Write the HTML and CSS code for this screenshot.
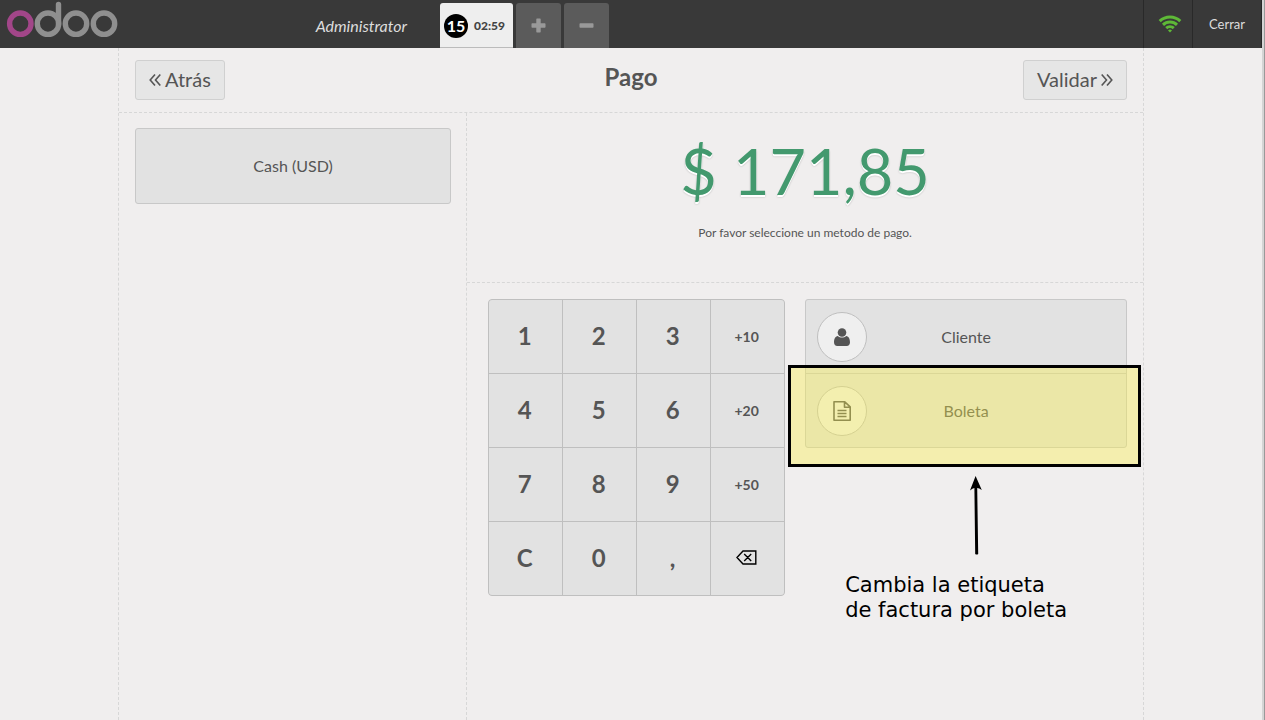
FILE: index.html
```html
<!DOCTYPE html>
<html lang="es">
<head>
<meta charset="utf-8">
<title>Pago</title>
<meta name="viewport" content="width=device-width, initial-scale=1">
<link rel="stylesheet" href="styles.css">
</head>
<body>
<div class="app">
  <header class="topbar">
    <div class="branding">
      <svg class="logo" width="112" height="38" viewBox="0 0 112 38" fill="none" stroke-width="5.400" role="img" aria-label="odoo">
        <g stroke="#8f8f8f">
          <circle cx="42" cy="23.700" r="10.700"/>
          <circle cx="70" cy="23.700" r="10.700"/>
          <circle cx="98" cy="23.700" r="10.700"/>
          <path d="M52.500 24V4.500" stroke-linecap="round"/>
        </g>
        <circle cx="14.300" cy="23.700" r="10.700" stroke="#a24689"/>
      </svg>
      <span class="username">Administrator</span>
    </div>
    <nav class="orders">
      <button class="order selected" type="button"><span class="order-number">15</span><span class="order-time">02:59</span></button>
      <button class="order square" type="button" aria-label="Nuevo pedido">
        <svg width="15" height="15" viewBox="0 0 15 15" fill="#999"><path d="M6 .5h3q.7 0 .7.700V5.300h4.100q.7 0 .7.700v3q0 .7-.7.700H9.700v4.100q0 .7-.7.700H6q-.7 0-.7-.7V9.700H1.200q-.7 0-.7-.7V6q0-.7.700-.7h4.100V1.200q0-.7.700-.7z"/></svg>
      </button>
      <button class="order square" type="button" aria-label="Eliminar pedido">
        <svg width="15" height="15" viewBox="0 0 15 15" fill="#999"><rect x=".5" y="5.300" width="14" height="4.400" rx=".8"/></svg>
      </button>
    </nav>
    <div class="status">
      <div class="wifi">
        <svg width="24" height="18" viewBox="0 0 24 18" fill="none" stroke="#5eb937" stroke-width="3" role="img" aria-label="Conectado">
          <path d="M1.700 6.200C7.500.6 16.500.6 22.300 6.200"/>
          <path d="M5 9.800c4-3.800 10-3.800 14 0"/>
          <path d="M8.200 13.200c2.200-2 5.400-2 7.600 0"/>
          <path d="M10 15.400q2-1.600 4 0L12 17.600z" fill="#5eb937" stroke="none"/>
        </svg>
      </div>
      <button class="close" type="button">Cerrar</button>
    </div>
  </header>

  <main class="screen">
    <div class="titlebar">
      <button class="nav-button" type="button">
        <svg width="12" height="14" viewBox="0 0 12 14" fill="none" stroke="currentColor" stroke-width="1.600"><path d="M6 1.500 1.200 7 6 12.500M11.300 1.500 6.500 7l4.800 5.500"/></svg>
        <span>Atrás</span>
      </button>
      <h1>Pago</h1>
      <button class="nav-button" type="button">
        <span>Validar</span>
        <svg width="12" height="14" viewBox="0 0 12 14" fill="none" stroke="currentColor" stroke-width="1.600"><path d="M.7 1.500 5.500 7 .7 12.500M6 1.500 10.800 7 6 12.500"/></svg>
      </button>
    </div>
    <div class="columns">
      <section class="methods">
        <button class="method" type="button">Cash (USD)</button>
      </section>
      <section class="payment">
        <div class="summary">
          <div class="total">$ 171,85</div>
          <div class="hint">Por favor seleccione un metodo de pago.</div>
        </div>
        <div class="controls">
          <div class="numpad">
            <button type="button">1</button><button type="button">2</button><button type="button">3</button><button type="button" class="mode">+10</button>
            <button type="button">4</button><button type="button">5</button><button type="button">6</button><button type="button" class="mode">+20</button>
            <button type="button">7</button><button type="button">8</button><button type="button">9</button><button type="button" class="mode">+50</button>
            <button type="button">C</button><button type="button">0</button><button type="button">,</button>
            <button type="button" aria-label="Borrar">
              <svg width="21" height="15" viewBox="0 0 21 15" fill="none" stroke="#000" stroke-width="1.400"><path d="M7 1h12.800v13H7L1 7.500zM8.200 4l7 7M15.200 4l-7 7"/></svg>
            </button>
          </div>
          <div class="side">
            <div class="options">
              <button class="option" type="button">
                <span class="badge"><svg width="16" height="18" viewBox="0 0 16 18" fill="#555"><circle cx="8" cy="4.500" r="4.300"/><path d="M3.800 7.900C1.200 8.200 0 10.800 0 14.300 0 16.500 1.300 18 3.300 18h9.400c2 0 3.300-1.500 3.300-3.700 0-3.500-1.200-6.100-3.800-6.400-2.400 2.200-6 2.200-8.400 0z"/></svg></span>
                <span class="option-label">Cliente</span>
              </button>
              <button class="option" type="button">
                <span class="badge"><svg width="18" height="20" viewBox="0 0 18 20" fill="none" stroke="#555" stroke-width="1.600"><path d="M1 .8h10.800l5.400 5v13.400H1zM11.500 1v5.300h5.500M4.500 9.500h9M4.500 12.500h9M4.500 15.500h9" stroke-linejoin="round"/></svg></span>
                <span class="option-label">Boleta</span>
              </button>
              <div class="highlight"></div>
            </div>
            <div class="note">
              <svg class="arrow" width="12" height="79" viewBox="0 0 12 79"><path d="M5.600 0 11.800 14Q9 12 7.200 12L8.200 78q-1.500 1-3 0L4.400 12Q2.500 12 0 14.500z"/></svg>
              <p>Cambia la etiqueta<br>de factura por boleta</p>
            </div>
          </div>
        </div>
      </section>
    </div>
  </main>
</div>
</body>
</html>
```
FILE: styles.css
```css
* { box-sizing: border-box; }

body {
  margin: 0;
  border-right: 1px solid #999;
  background: #f0eeee;
  color: #555;
  font-family: Lato, "Liberation Sans", sans-serif;
  font-size: 16px;
}

button {
  margin: 0;
  padding: 0;
  border: 0;
  font: inherit;
  color: inherit;
  background: none;
  cursor: pointer;
}

svg { display: block; flex: none; }

.app {
  display: flex;
  flex-direction: column;
  min-height: 100vh;
  border-right: 2px solid #d4d4d4;
}

.topbar {
  display: flex;
  height: 48px;
  background: #393939;
  color: #ddd;
}

.branding {
  display: flex;
  justify-content: space-between;
  align-items: center;
  width: 440px;
  padding: 0 33px 0 6px;
}

.logo { align-self: flex-start; }

.username {
  padding-top: 2px;
  font-style: italic;
  color: #ddd;
}

.orders {
  display: flex;
  flex: 1;
  gap: 3px;
  padding-top: 3px;
}

.order {
  display: flex;
  align-items: center;
  justify-content: center;
  border-radius: 3px 3px 0 0;
  background: #5b5b5b;
}

.square { width: 45px; }

.selected {
  justify-content: flex-start;
  gap: 6px;
  width: 73px;
  padding: 2px 0 0 4px;
  border-bottom: 1px solid #bbb;
  background: #eee;
  color: #444;
  font-size: 12px;
  font-weight: 700;
}

.order-number {
  width: 24px;
  height: 24px;
  border-radius: 50%;
  background: #000;
  color: #fff;
  font-size: 16px;
  line-height: 24px;
}

.order-time { padding-bottom: 2px; font-weight: 900; }

.status { display: flex; }

.wifi, .close {
  display: flex;
  align-items: center;
  justify-content: center;
  border-left: 1px solid #292929;
}

.wifi { width: 49px; padding-left: 4px; }
.close { width: 70px; border-right: 1px solid #292929; font-size: 13px; }

.screen {
  display: flex;
  flex: 1;
  flex-direction: column;
  width: 100%;
  max-width: 1026px;
  margin: 0 auto;
  border: 1px dashed #d7d7d7;
  border-width: 0 1px;
}

.titlebar {
  display: grid;
  grid-template-columns: 1fr auto 1fr;
  align-items: center;
  height: 65px;
  padding: 0 16px;
  border-bottom: 1px dashed #d7d7d7;
}

h1 {
  margin: 0;
  font-size: 24px;
  line-height: 30px;
  padding-bottom: 6px;
}

.nav-button {
  display: flex;
  align-items: center;
  justify-self: start;
  gap: 4px;
  height: 40px;
  padding: 0 13px 2px;
  border: 1px solid #d0d0d0;
  border-radius: 3px;
  background: #e6e6e6;
  font-size: 20px;
}

.nav-button svg { margin-top: 2px; }

.nav-button:last-child { justify-self: end; }

.columns { display: flex; flex: 1; }

.methods { width: 34%; padding: 15px 16px; }

.method {
  width: 100%;
  height: 76px;
  padding-bottom: 2px;
  border: 1px solid #c8c8c8;
  border-radius: 3px;
  background: #e2e2e2;
}

.payment {
  width: 66%;
  margin-left: -1px;
  flex: 1;
  border-left: 1px dashed #d7d7d7;
}

.summary {
  height: 170px;
  border-bottom: 1px dashed #d7d7d7;
  text-align: center;
}

.total {
  padding-top: 19px;
  color: #43996e;
  font-size: 63px;
  line-height: 78px;
  text-shadow: 0 2px #fff, 0 2px 2px rgba(0, 0, 0, .27);
}

.hint { padding-top: 15px; font-size: 12px; line-height: 16px; }

.controls {
  display: flex;
  gap: 20px;
  padding: 16px 16px 16px 21px;
}

.numpad {
  display: grid;
  grid-template-columns: repeat(4, 73px);
  grid-auto-rows: 73px;
  gap: 1px;
  align-self: flex-start;
  overflow: hidden;
  border: 1px solid #bfbfbf;
  border-radius: 4px;
  background: #bfbfbf;
}

.numpad button {
  display: flex;
  align-items: center;
  justify-content: center;
  padding: 0 2px 2px 0;
  background: #e2e2e2;
  font-size: 24px;
  font-weight: 700;
}

.numpad .mode { padding-bottom: 0; font-size: 14px; }

.side { flex: 1; }

.options {
  position: relative;
  border: 1px solid #c8c8c8;
  border-radius: 3px;
  background: #e2e2e2;
}

.option {
  display: flex;
  align-items: center;
  width: 100%;
  height: 73px;
  padding: 0 11px;
}

.option + .option { height: 74px; border-top: 1px solid #c8c8c8; }

.badge {
  display: flex;
  align-items: center;
  justify-content: center;
  width: 50px;
  height: 50px;
  border: 1px solid #bfbfbf;
  border-radius: 50%;
  background: #efefef;
}

.option-label { flex: 1; padding-right: 50px; }

.highlight {
  position: absolute;
  inset: 65px -15px -20px -18px;
  border: 3px solid #000;
  background: rgba(250, 240, 70, .38);
  pointer-events: none;
}

.note {
  padding: 28px 0 0 40px;
  color: #000;
  font-family: "DejaVu Sans", sans-serif;
  font-size: 21px;
  line-height: 25px;
}

.arrow { margin-left: 125px; }

.note p { margin: 18px 0 0; white-space: nowrap; }
```
